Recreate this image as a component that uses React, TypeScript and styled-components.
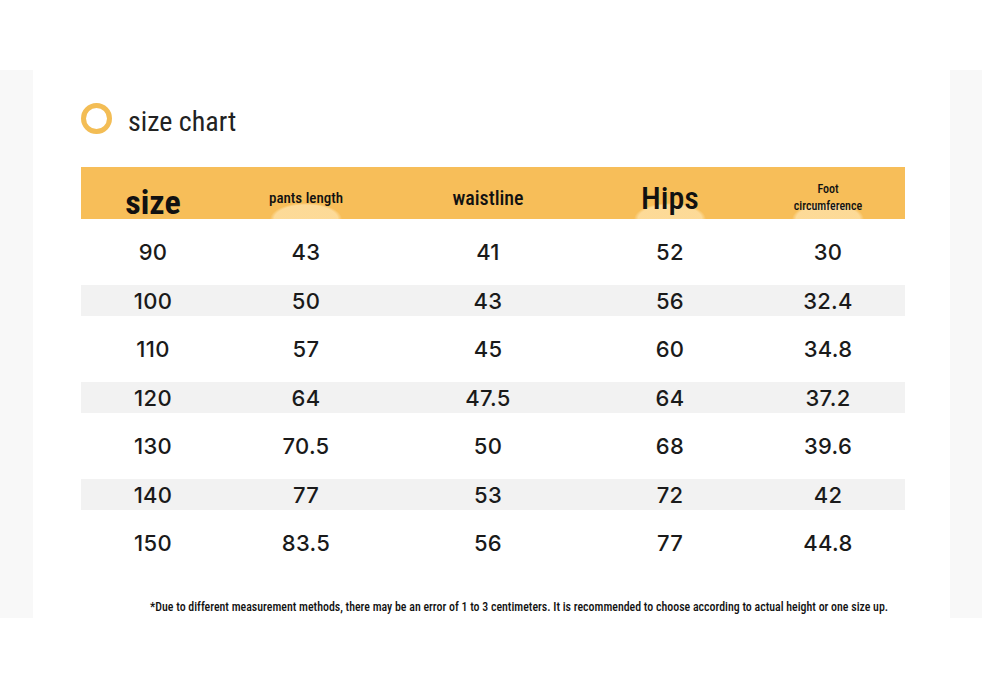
import React from "react";
import styled, { createGlobalStyle } from "styled-components";

const GlobalStyle = createGlobalStyle`
  html, body {
    margin: 0;
    padding: 0;
    background: #ffffff;
  }
  #root {
    width: 982px;
    height: 688px;
  }
`;

const narrow = `"Roboto Condensed", "Liberation Sans Narrow", "DejaVu Sans Condensed", "Roboto", sans-serif`;
const numFont = `"Inter", "Noto Sans", sans-serif`;

const columns = ["144px", "162px", "202px", "162px", "154px"];

const rows = [
  ["90", "43", "41", "52", "30"],
  ["100", "50", "43", "56", "32.4"],
  ["110", "57", "45", "60", "34.8"],
  ["120", "64", "47.5", "64", "37.2"],
  ["130", "70.5", "50", "68", "39.6"],
  ["140", "77", "53", "72", "42"],
  ["150", "83.5", "56", "77", "44.8"],
];

export default function App() {
  return (
    <>
      <GlobalStyle />
      <Page>
        <Band>
          <Card>
            <TitleRow>
              <Ring />
              <Title>size chart</Title>
            </TitleRow>
            <Table>
              <HeadRow>
                <HeadCell size={34} weight={700} offset={18}>size</HeadCell>
                <HeadCell size={15} weight={500} offset={10} glow>pants length</HeadCell>
                <HeadCell size={20} weight={500} offset={10}>waistline</HeadCell>
                <HeadCell size={32} weight={500} offset={10} glow>Hips</HeadCell>
                <HeadCell size={12} weight={500} offset={10} glow>
                  Foot
                  <br />
                  circumference
                </HeadCell>
              </HeadRow>
              {rows.map((row, i) => (
                <DataRow key={row[0]} striped={i % 2 === 1}>
                  {row.map((v, j) => (
                    <Cell key={j}>{v}</Cell>
                  ))}
                </DataRow>
              ))}
            </Table>
            <Note>
              *Due to different measurement methods, there may be an error of 1 to 3 centimeters. It is recommended to
              choose according to actual height or one size up.
            </Note>
          </Card>
        </Band>
      </Page>
    </>
  );
}

const Page = styled.div`
  width: 982px;
  height: 688px;
  padding-top: 70px;
  box-sizing: border-box;
  background: #ffffff;
`;

const Band = styled.div`
  height: 548px;
  background: #f8f8f8;
  padding: 0 32px 0 33px;
`;

const Card = styled.div`
  height: 100%;
  background: #ffffff;
  padding: 32px 0 0 48px;
  box-sizing: border-box;
`;

const TitleRow = styled.div`
  display: flex;
  align-items: center;
  gap: 16px;
  height: 32px;
`;

const Ring = styled.div`
  width: 31px;
  height: 31px;
  border-radius: 50%;
  border: 5px solid #f3bd55;
  box-sizing: border-box;
  flex-shrink: 0;
`;

const Title = styled.div`
  font-family: ${narrow};
  font-stretch: condensed;
  font-size: 28px;
  color: #222222;
  line-height: 1;
  padding-top: 8px;
`;

const Table = styled.div`
  margin-top: 33px;
  width: 824px;
`;

const HeadRow = styled.div`
  display: grid;
  grid-template-columns: ${columns.join(" ")};
  height: 52px;
  background: #f7be59;
`;

const HeadCell = styled.div<{ size: number; weight?: number; offset?: number; glow?: boolean }>`
  display: flex;
  align-items: center;
  justify-content: center;
  text-align: center;
  box-sizing: border-box;
  font-family: ${narrow};
  font-stretch: condensed;
  font-size: ${p => p.size}px;
  font-weight: ${p => p.weight ?? 400};
  line-height: ${p => (p.size < 14 ? 1.45 : 1)};
  color: #111111;
  padding-top: ${p => p.offset ?? 0}px;
  background: ${p =>
    p.glow
      ? "radial-gradient(ellipse 36px 16px at 50% 100%, rgba(255, 230, 178, 0.7) 0%, rgba(255, 230, 178, 0.7) 88%, rgba(255,230,178,0) 100%)"
      : "none"};
`;

const DataRow = styled.div<{ striped: boolean }>`
  display: grid;
  grid-template-columns: ${columns.join(" ")};
  height: ${p => (p.striped ? 31 : 66)}px;
  background: ${p => (p.striped ? "#f2f2f2" : "#ffffff")};
`;

const Cell = styled.div`
  display: flex;
  align-items: center;
  justify-content: center;
  font-family: ${numFont};
  font-size: 22px;
  font-weight: 500;
  color: #1a1a1a;
  letter-spacing: 0.3px;
`;

const Note = styled.div`
  margin-top: 24px;
  padding-left: 69px;
  font-family: ${narrow};
  font-stretch: condensed;
  font-size: 11.9px;
  font-weight: 500;
  color: #111111;
  white-space: nowrap;
`;
